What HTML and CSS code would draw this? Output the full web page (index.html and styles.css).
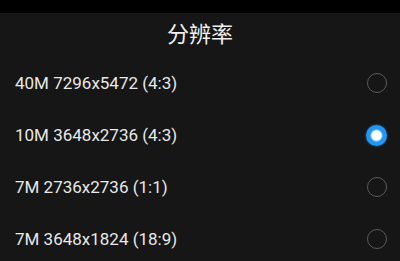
FILE: index.html
```html
<!DOCTYPE html>
<html>
<head>
    <title>分辨率</title>
    <link rel="stylesheet" href="styles.css">
</head>
<body>
    <div class="statusbar"></div>
    <div class="dialog">
        <h2 class="title">分辨率</h2>
        <div class="option">
            <span class="label">40M 7296x5472 (4:3)</span>
            <span class="radio"></span>
        </div>
        <div class="option">
            <span class="label">10M 3648x2736 (4:3)</span>
            <span class="radio checked"></span>
        </div>
        <div class="option">
            <span class="label">7M 2736x2736 (1:1)</span>
            <span class="radio"></span>
        </div>
        <div class="option">
            <span class="label">7M 3648x1824 (18:9)</span>
            <span class="radio"></span>
        </div>
    </div>
</body>
</html>
```

FILE: styles.css
```css
body {
    margin: 0;
    background-color: #161616;
    font-family: Roboto, "Noto Sans CJK SC", sans-serif;
    color: #e8e8e8;
    overflow: hidden;
}
.statusbar {
    height: 13px;
    background-color: #000;
}
.title {
    margin: 0;
    height: 44px;
    line-height: 44px;
    text-align: center;
    font-size: 22px;
    font-weight: normal;
    color: #f0f0f0;
}
.option {
    display: flex;
    align-items: center;
    justify-content: space-between;
    height: 52px;
    padding: 0 13px 0 15px;
}
.label {
    font-size: 17px;
}
.radio {
    width: 18px;
    height: 18px;
    border: 1.5px solid #5a5a5a;
    border-radius: 50%;
}
.radio.checked {
    width: 21px;
    height: 21px;
    border: none;
    background: radial-gradient(circle, #ffffff 0, #ffffff 4px, #cfe9ff 5px, #2196f3 6.5px);
    box-shadow: 0 0 2px #1e88e5;
}
```
